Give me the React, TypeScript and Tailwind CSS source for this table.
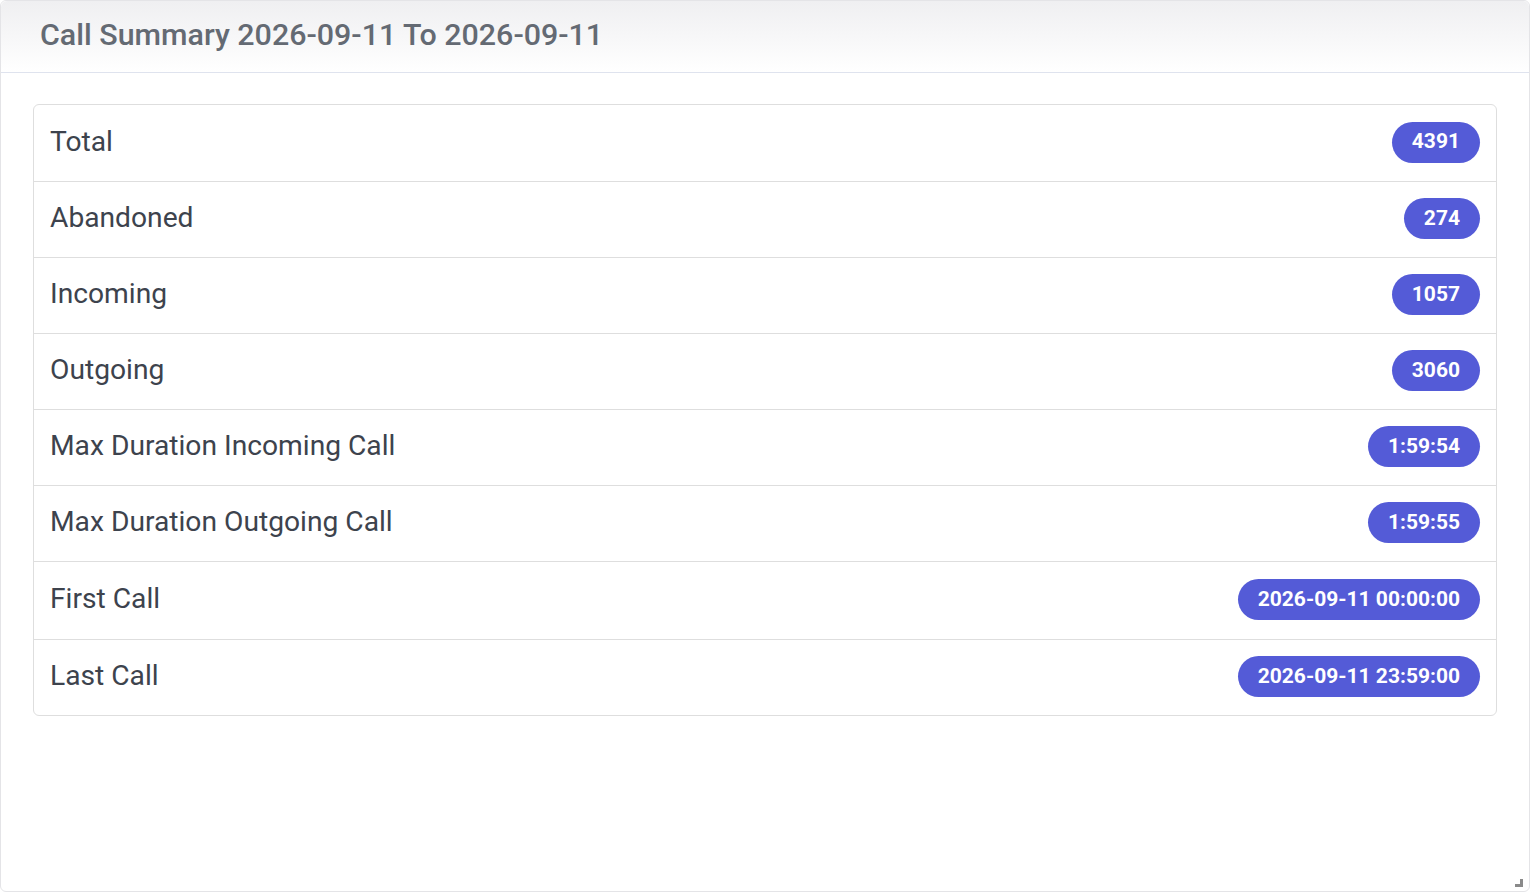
import React from "react";

const rows: { label: string; value: string }[] = [
  { label: "Total", value: "4391" },
  { label: "Abandoned", value: "274" },
  { label: "Incoming", value: "1057" },
  { label: "Outgoing", value: "3060" },
  { label: "Max Duration Incoming Call", value: "1:59:54" },
  { label: "Max Duration Outgoing Call", value: "1:59:55" },
  { label: "First Call", value: "2026-09-11 00:00:00" },
  { label: "Last Call", value: "2026-09-11 23:59:00" },
];

export default function App() {
  return (
    <div className="h-[894px] w-[1530px] bg-white font-['Roboto',sans-serif]">
      <div className="relative flex h-[892px] w-[1530px] flex-col rounded-md border border-[#e4e4e7] bg-white">
        <div className="flex h-[72px] shrink-0 items-center rounded-t-md border-b border-[#dfe3ee] bg-gradient-to-b from-[#efeff1] to-white px-[39px] pb-[3px]">
          <h2 className="text-[30.4px] font-medium text-[#646a73]">
            Call Summary 2026-09-11 To 2026-09-11
          </h2>
        </div>
        <div className="px-8 pt-[31px]">
          <ul className="rounded-md border border-[#dedede]">
            {rows.map((r, i) => (
              <li
                key={r.label}
                className={`flex items-center justify-between pl-4 pr-4 pb-[2px] ${
                  i > 0 ? "border-t border-[#dedede]" : ""
                } ${i === 6 ? "h-[78px]" : "h-[76px]"}`}
              >
                <span className="text-[28.2px] text-[#3d434d]">{r.label}</span>
                <span className="flex h-[41px] items-center rounded-full bg-[#545bd7] px-5 text-[21px] font-bold text-white">
                  {r.value}
                </span>
              </li>
            ))}
          </ul>
        </div>
        <div className="absolute bottom-[4px] right-[6px] h-[8px] w-[8px]">
          <div className="absolute bottom-0 right-0 h-[8px] w-[3px] bg-[#8a8a8a]" />
          <div className="absolute bottom-0 right-0 h-[3px] w-[8px] bg-[#8a8a8a]" />
        </div>
      </div>
    </div>
  );
}
